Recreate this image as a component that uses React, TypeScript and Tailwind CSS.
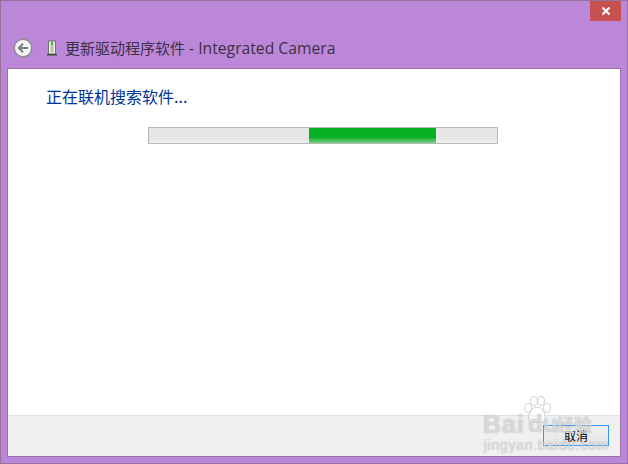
export default function App() {
  return (
    <div className="relative w-[628px] h-[464px] overflow-hidden bg-[#bc87d9] border border-[#96709f] flex flex-col font-['Liberation_Sans','Noto_Sans_CJK_SC',sans-serif]">
      <div className="h-[19px] shrink-0 flex justify-end pr-[6px]">
        <div className="w-[31px] h-[20px] bg-[#c75050] flex items-center justify-center">
          <svg width="10" height="10" viewBox="0 0 10 10">
            <path d="M1.5 1.5 L8.5 8.5 M8.5 1.5 L1.5 8.5" stroke="#fff" strokeWidth="2" />
          </svg>
        </div>
      </div>
      <div className="h-[48px] shrink-0 flex items-center pl-[12px] pt-[7px]">
        <svg width="20" height="20" viewBox="0 0 20 20" className="shrink-0">
          <circle cx="10" cy="10" r="8.8" fill="#f4f4f4" stroke="#8d8d8d" strokeWidth="1.6" />
          <path d="M15 10 H6 M10 5.8 L5.8 10 L10 14.2" fill="none" stroke="#7b7b7b" strokeWidth="2" />
        </svg>
        <svg width="12" height="16" viewBox="0 0 12 16" className="ml-[13px] shrink-0">
          <rect x="2.5" y="1" width="7" height="13" fill="#eef0e8" stroke="#6f7668" />
          <rect x="4.5" y="2.5" width="3" height="10" fill="#b9c2ae" />
          <rect x="5" y="2" width="2" height="3" fill="#4fb04f" />
          <rect x="1" y="14" width="10" height="1.5" fill="#3f4a3a" />
        </svg>
        <span className="ml-[7px] text-[15px] leading-[20px] text-[#3d3044] whitespace-nowrap font-['Noto_Sans_CJK_SC',sans-serif]">
          更新驱动程序软件<span className="text-[15.7px] font-['Open_Sans',sans-serif]"> - Integrated Camera</span>
        </span>
      </div>
      <div className="mx-[6px] mb-[6px] flex-1 flex flex-col border border-[#9a73ad] bg-white">
        <div className="flex-1 flex flex-col">
          <div className="pl-[38px] pt-[16px] text-[16px] leading-[22px] text-[#003399] font-['Noto_Sans_CJK_SC','Open_Sans',sans-serif]">
            正在联机搜索软件...
          </div>
          <div className="ml-[140px] mt-[20px] w-[350px] h-[17px] border border-[#b8b8b8] bg-gradient-to-b from-[#e6e6e6] from-75% to-[#f0f0f0] flex">
            <div className="ml-[160px] w-[127px] h-full bg-gradient-to-b from-[#06b025] from-65% to-[#6fd282]" />
          </div>
        </div>
        <div className="h-[41px] shrink-0 border-t border-[#dfdfdf] bg-[#f0f0f0] flex justify-end items-start pr-[11px] pt-[9px]">
          <button className="w-[66px] h-[21px] border border-[#3399ff] bg-gradient-to-b from-[#f0f0f0] to-[#e5e5e5] text-[12px] leading-[19px] text-black font-['Noto_Sans_CJK_SC',sans-serif]">
            取消
          </button>
        </div>
      </div>
      <div className="absolute left-[481px] top-[399px] w-[130px] h-[56px] text-white/60 [text-shadow:0_0_1px_rgba(120,120,120,0.7)] pointer-events-none">
        <span className="absolute left-[1px] top-[9px] text-[25px] leading-[30px] font-bold tracking-[1px]">Bai</span>
        <svg width="34" height="32" viewBox="0 0 34 32" className="absolute left-[38px] top-[-5px]" fill="currentColor" stroke="rgba(130,130,130,0.35)" strokeWidth="1">
          <ellipse cx="8" cy="13" rx="3.5" ry="4.5" />
          <ellipse cx="14" cy="6" rx="3.5" ry="4.5" />
          <ellipse cx="21" cy="6" rx="3.5" ry="4.5" />
          <ellipse cx="27" cy="13" rx="3.5" ry="4.5" />
          <path d="M17 12 C11 12 8 20 9 25 C10 29 15 27 17 27 C19 27 24 29 25 25 C26 20 23 12 17 12 Z" />
        </svg>
        <span className="absolute left-[46px] top-[9px] text-[24px] leading-[30px] font-bold">du</span>
        <span className="absolute left-[74px] top-[12px] text-[18px] leading-[24px] font-bold font-['Noto_Sans_CJK_SC',sans-serif]">经验</span>
        <span className="absolute left-[2px] top-[37px] text-[14px] leading-[16px] tracking-[0.7px] whitespace-nowrap">jingyan.baidu.com</span>
      </div>
    </div>
  );
}
